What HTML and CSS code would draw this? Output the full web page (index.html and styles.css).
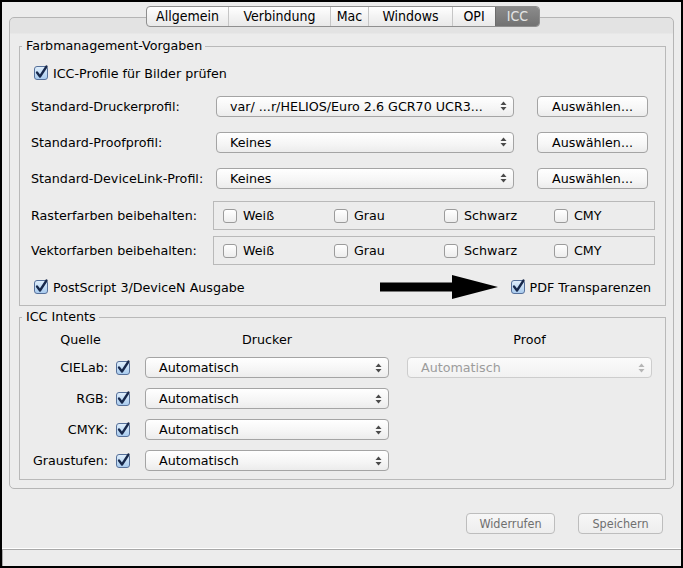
FILE: index.html
```html
<!DOCTYPE html>
<html lang="de">
<head>
<meta charset="utf-8">
<title>ICC</title>
<link rel="stylesheet" href="styles.css">
</head>
<body>
<div class="window">
  <div class="tabs">
    <span class="tab t-allg">Allgemein</span>
    <span class="tab t-verb">Verbindung</span>
    <span class="tab t-mac">Mac</span>
    <span class="tab t-win">Windows</span>
    <span class="tab t-opi">OPI</span>
    <span class="tab t-icc sel">ICC</span>
  </div>

  <div class="panel">
    <div class="group g1">
      <div class="group-title">Farbmanagement-Vorgaben</div>

      <label class="check row-icc"><span class="cb on"><svg viewBox="0 0 14 14" width="14" height="14"><path d="M3 6.5 L6 10.5 L12.5 0.5" /></svg></span>ICC-Profile für Bilder prüfen</label>

      <div class="profiles">
        <div class="prow">
          <span class="plabel">Standard-Druckerprofil:</span>
          <div class="popup"><span class="ptext">var/ ...r/HELIOS/Euro 2.6 GCR70 UCR3...</span><svg class="arr" viewBox="0 0 7 10" width="7" height="10"><polygon points="0.5,4 3.5,0.5 6.5,4"/><polygon points="0.5,6 3.5,9.5 6.5,6"/></svg></div>
          <button class="btn choose">Auswählen...</button>
        </div>
        <div class="prow">
          <span class="plabel">Standard-Proofprofil:</span>
          <div class="popup"><span class="ptext">Keines</span><svg class="arr" viewBox="0 0 7 10" width="7" height="10"><polygon points="0.5,4 3.5,0.5 6.5,4"/><polygon points="0.5,6 3.5,9.5 6.5,6"/></svg></div>
          <button class="btn choose">Auswählen...</button>
        </div>
        <div class="prow">
          <span class="plabel">Standard-DeviceLink-Profil:</span>
          <div class="popup"><span class="ptext">Keines</span><svg class="arr" viewBox="0 0 7 10" width="7" height="10"><polygon points="0.5,4 3.5,0.5 6.5,4"/><polygon points="0.5,6 3.5,9.5 6.5,6"/></svg></div>
          <button class="btn choose">Auswählen...</button>
        </div>
      </div>

      <div class="colorrows">
        <div class="crow">
          <span class="clabel">Rasterfarben beibehalten:</span>
          <div class="cbox">
            <label class="check"><span class="cb"></span>Weiß</label>
            <label class="check"><span class="cb"></span>Grau</label>
            <label class="check"><span class="cb"></span>Schwarz</label>
            <label class="check"><span class="cb"></span>CMY</label>
          </div>
        </div>
        <div class="crow">
          <span class="clabel">Vektorfarben beibehalten:</span>
          <div class="cbox">
            <label class="check"><span class="cb"></span>Weiß</label>
            <label class="check"><span class="cb"></span>Grau</label>
            <label class="check"><span class="cb"></span>Schwarz</label>
            <label class="check"><span class="cb"></span>CMY</label>
          </div>
        </div>
      </div>

      <div class="lastrow">
        <label class="check"><span class="cb on"><svg viewBox="0 0 14 14" width="14" height="14"><path d="M3 6.5 L6 10.5 L12.5 0.5" /></svg></span>PostScript 3/DeviceN Ausgabe</label>
        <svg class="bigarrow" viewBox="0 0 118 24" width="118" height="24"><polygon points="0,7.5 72,7.5 72,0 118,12 72,24 72,16.5 0,16.5"/></svg>
        <label class="check"><span class="cb on"><svg viewBox="0 0 14 14" width="14" height="14"><path d="M3 6.5 L6 10.5 L12.5 0.5" /></svg></span>PDF Transparenzen</label>
      </div>
    </div>

    <div class="group g2">
      <div class="group-title">ICC Intents</div>
      <div class="intents">
        <span class="hdr h-src">Quelle</span>
        <span class="hdr h-prn">Drucker</span>
        <span class="hdr h-prf">Proof</span>

        <span class="ilabel">CIELab:</span>
        <span class="cb on icb"><svg viewBox="0 0 14 14" width="14" height="14"><path d="M3 6.5 L6 10.5 L12.5 0.5" /></svg></span>
        <div class="popup ipop"><span class="ptext">Automatisch</span><svg class="arr" viewBox="0 0 7 10" width="7" height="10"><polygon points="0.5,4 3.5,0.5 6.5,4"/><polygon points="0.5,6 3.5,9.5 6.5,6"/></svg></div>
        <div class="popup ipop proof disabled"><span class="ptext">Automatisch</span><svg class="arr" viewBox="0 0 7 10" width="7" height="10"><polygon points="0.5,4 3.5,0.5 6.5,4"/><polygon points="0.5,6 3.5,9.5 6.5,6"/></svg></div>

        <span class="ilabel">RGB:</span>
        <span class="cb on icb"><svg viewBox="0 0 14 14" width="14" height="14"><path d="M3 6.5 L6 10.5 L12.5 0.5" /></svg></span>
        <div class="popup ipop"><span class="ptext">Automatisch</span><svg class="arr" viewBox="0 0 7 10" width="7" height="10"><polygon points="0.5,4 3.5,0.5 6.5,4"/><polygon points="0.5,6 3.5,9.5 6.5,6"/></svg></div>

        <span class="ilabel">CMYK:</span>
        <span class="cb on icb"><svg viewBox="0 0 14 14" width="14" height="14"><path d="M3 6.5 L6 10.5 L12.5 0.5" /></svg></span>
        <div class="popup ipop"><span class="ptext">Automatisch</span><svg class="arr" viewBox="0 0 7 10" width="7" height="10"><polygon points="0.5,4 3.5,0.5 6.5,4"/><polygon points="0.5,6 3.5,9.5 6.5,6"/></svg></div>

        <span class="ilabel">Graustufen:</span>
        <span class="cb on icb"><svg viewBox="0 0 14 14" width="14" height="14"><path d="M3 6.5 L6 10.5 L12.5 0.5" /></svg></span>
        <div class="popup ipop"><span class="ptext">Automatisch</span><svg class="arr" viewBox="0 0 7 10" width="7" height="10"><polygon points="0.5,4 3.5,0.5 6.5,4"/><polygon points="0.5,6 3.5,9.5 6.5,6"/></svg></div>
      </div>
    </div>
  </div>

  <div class="actions">
    <button class="btn act w-undo">Widerrufen</button>
    <button class="btn act w-save">Speichern</button>
  </div>
  <div class="status"><div class="status-in"></div></div>
</div>
</body>
</html>
```
FILE: styles.css
```css
html, body {
  margin: 0;
  padding: 0;
  background: #ececec;
}
body {
  font-family: "DejaVu Sans", "Liberation Sans", sans-serif;
  font-size: 12.7px;
  color: #000;
}
.window {
  width: 683px;
  height: 568px;
  box-sizing: border-box;
  border: 2px solid #000;
  background: #ececec;
  display: flex;
  flex-direction: column;
  overflow: hidden;
}

/* Tabs */
.tabs {
  align-self: center;
  display: flex;
  height: 21px;
  box-sizing: border-box;
  margin: 4px 0 -10px 3px;
  border: 1px solid #8f8f8f;
  border-radius: 4px;
  background: linear-gradient(#ffffff, #f3f3f3 50%, #e9e9e9);
  position: relative;
  z-index: 1;
  font-family: "DejaVu Sans Condensed", "DejaVu Sans", sans-serif;
  font-size: 14px;
}
.tab {
  display: flex;
  align-items: center;
  justify-content: center;
  box-sizing: border-box;
  border-left: 1px solid #c6c6c6;
  line-height: 19px;
}
.tab:first-child { border-left: 0; }
.t-allg { width: 81px; }
.t-verb { width: 102px; }
.t-mac { width: 38px; }
.t-win { width: 84px; }
.t-opi { width: 43px; }
.t-icc { width: 44px; }
.tab.sel {
  background: linear-gradient(#8b8b8b, #727272);
  color: #e4e4e4;
  border-left-color: #6c6c6c;
  border-radius: 0 3px 3px 0;
}

/* Panel */
.panel {
  margin: 0 7px 0 7px;
  height: 472px;
  box-sizing: border-box;
  border: 1px solid #b5b5b5;
  border-radius: 5px;
  background: linear-gradient(#e3e3e3 0, #e3e3e3 15px, #ececec 16px);
  padding: 28px 7px 0 9px;
}
.group {
  border: 1px solid #b9b9b9;
}
.group-title {
  margin: -9px 0 0 2px;
  padding: 0 3px 0 4px;
  width: max-content;
  height: 16px;
  line-height: 16px;
  background: #ececec;
}

/* Checkboxes */
.check {
  display: flex;
  align-items: center;
  gap: 5px;
  white-space: nowrap;
}
.cb {
  width: 14px;
  height: 14px;
  box-sizing: border-box;
  border: 1px solid #9b9b9b;
  border-radius: 3px;
  background: linear-gradient(#ffffff, #ededed);
  flex: none;
  display: block;
}
.cb.on {
  border-color: #56709a;
  background: linear-gradient(#dfeefb, #a9cbee);
}
.cb svg {
  display: block;
  margin: -1px 0 0 -1px;
  overflow: visible;
}
.cb svg path {
  fill: none;
  stroke: #17284b;
  stroke-width: 2.3;
  stroke-linecap: round;
  stroke-linejoin: round;
}

.row-icc {
  height: 20px;
  margin-top: 9px;
  padding-left: 14px;
}

/* Profile rows */
.profiles {
  display: flex;
  flex-direction: column;
  gap: 14px;
  margin-top: 12px;
  padding-left: 11px;
}
.prow {
  display: flex;
  align-items: center;
  height: 22px;
}
.plabel {
  width: 185px;
  flex: none;
  white-space: nowrap;
}
.popup {
  display: flex;
  align-items: center;
  justify-content: space-between;
  box-sizing: border-box;
  height: 21px;
  border: 1px solid #a4a4a4;
  border-radius: 4px;
  background: linear-gradient(#ffffff, #f5f5f5 60%, #ececec);
  padding: 0 6px 0 13px;
}
.prow .popup { width: 298px; }
.ptext { white-space: nowrap; }
.arr polygon { fill: #4a4a4a; }
.btn {
  font: inherit;
  color: #000;
  box-sizing: border-box;
  height: 21px;
  border: 1px solid #a4a4a4;
  border-radius: 4px;
  background: linear-gradient(#ffffff, #f6f6f6 60%, #ececec);
  padding: 0;
}
.choose {
  width: 111px;
  margin-left: 23px;
}

/* Color rows */
.colorrows {
  display: flex;
  flex-direction: column;
  gap: 6px;
  margin-top: 12px;
  padding-left: 11px;
}
.crow {
  display: flex;
  align-items: center;
}
.clabel {
  width: 182px;
  flex: none;
  white-space: nowrap;
}
.cbox {
  width: 442px;
  height: 29px;
  box-sizing: border-box;
  border: 1px solid #b9b9b9;
  display: grid;
  grid-template-columns: 111px 110px 110px 110px;
  align-items: center;
  padding-left: 9px;
}
.cbox .check { gap: 6px; }

/* Last row */
.lastrow {
  display: flex;
  align-items: center;
  height: 22px;
  margin-top: 11px;
  padding: 0 14px 7px 14px;
}
.lastrow .check:first-child { margin-right: auto; }
.bigarrow {
  margin-right: 13px;
  display: block;
}
.bigarrow polygon { fill: #000; }

/* ICC intents */
.g2 {
  margin-top: 11px;
}
.intents {
  display: grid;
  grid-template-columns: 77px 8px 14px 15px 244px 18px 245px;
  grid-template-rows: 15px 21px 21px 21px 21px;
  row-gap: 10px;
  align-items: center;
  margin-top: 7px;
  padding: 0 0 8px 11px;
}
.hdr { text-align: center; line-height: 15px; }
.h-src { grid-column: 1 / 4; }
.h-prn { grid-column: 5; }
.h-prf { grid-column: 7; }
.ilabel {
  grid-column: 1;
  text-align: right;
  white-space: nowrap;
}
.icb { grid-column: 3; }
.ipop { grid-column: 5; }
.ipop.proof { grid-column: 7; grid-row: 2; }
.popup.disabled {
  border-color: #cdcdcd;
  color: #9c9c9c;
  background: linear-gradient(#fbfbfb, #f1f1f1);
}
.popup.disabled .arr polygon { fill: #b5b5b5; }

/* Actions */
.actions {
  display: flex;
  justify-content: flex-end;
  gap: 23px;
  margin-top: 24px;
  padding-right: 18px;
}
.act {
  color: #6f6f6f;
  border-color: #bdbdbd;
  font-family: "DejaVu Sans Condensed", "DejaVu Sans", sans-serif;
  font-size: 12.5px;
  background: linear-gradient(#f7f7f7, #ededed);
}
.w-undo { width: 89px; }
.w-save { width: 85px; }

/* Status */
.status {
  margin-top: auto;
  height: 18px;
  box-sizing: border-box;
  border-top: 1px solid #ffffff;
}
.status-in {
  height: 17px;
  box-sizing: border-box;
  border-top: 1px solid #a8a8a8;
  border-left: 1px solid #a8a8a8;
  background: #ececec;
}
```
